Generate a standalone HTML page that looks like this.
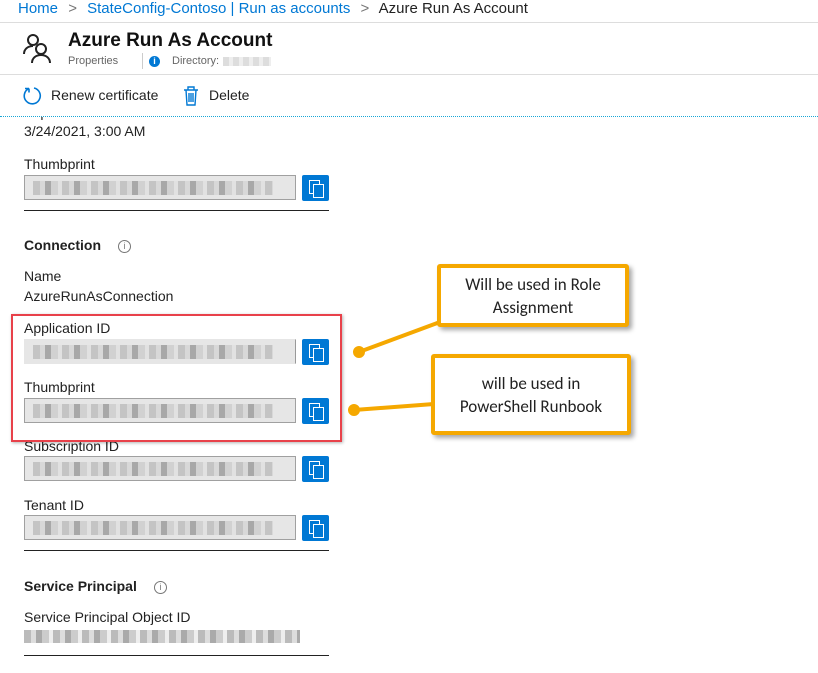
<!DOCTYPE html>
<html><head><meta charset="utf-8"><style>
*{margin:0;padding:0;box-sizing:border-box}
body{width:818px;height:673px;background:#fff;font-family:"Segoe UI","Liberation Sans",sans-serif;color:#222;position:relative;overflow:hidden;font-size:14px}
.a{position:absolute;white-space:nowrap}
.lbl{font-size:14px;color:#222}
.box{position:absolute;left:24px;width:272px;height:25px;background:#e6e6e6;border:1px solid #a0a0a0}
.blur{position:absolute;left:8px;top:5px;width:240px;height:14px;background:
repeating-linear-gradient(90deg,#bbb 0 7px,#d4d4d4 7px 12px,#999 12px 18px,#ccc 18px 25px,#e0e0e0 25px 29px);opacity:.8}
.cb{position:absolute;left:302px;width:27px;height:26px;background:#0078d4;border-radius:2px}
.cb:before,.cb:after{content:"";position:absolute;border:1.5px solid #fff;background:#0078d4}
.cb:before{left:7px;top:5px;width:9px;height:12px}
.cb:after{left:11px;top:9px;width:9px;height:12px}
.hr{position:absolute;left:24px;width:305px;height:1px;background:#222}
.bold{font-weight:bold;font-size:14px}
.info{position:absolute;width:13px;height:13px;border:1px solid #777;border-radius:50%;font-size:9px;color:#777;text-align:center;line-height:11px}
.call{position:absolute;background:#fff;border:4px solid #f5a800;border-radius:3px;box-shadow:3px 3px 5px rgba(0,0,0,.35);font-family:"Carlito","Liberation Sans",sans-serif;font-size:17px;color:#222;text-align:center;line-height:23px}
</style></head><body>
<div class="a" style="left:18px;top:0px;font-size:15px;color:#0078d4">Home <span style="color:#777;margin:0 6px">&gt;</span> StateConfig-Contoso | Run as accounts <span style="color:#777;margin:0 6px">&gt;</span> <span style="color:#222">Azure Run As Account</span></div>
<div class="a" style="left:0;top:22px;width:818px;height:1px;background:#ddd"></div>
<svg class="a" style="left:22px;top:32px" width="32" height="32" viewBox="0 0 32 32" fill="none" stroke="#222" stroke-width="2"><circle cx="11" cy="8" r="5"/><path d="M2 22c0-5 4-8 9-8"/><circle cx="19" cy="17" r="5"/><path d="M10 31c0-5 4-8 9-8s9 3 9 8"/></svg>
<div class="a" style="left:68px;top:30px;font-size:19px;font-weight:600;color:#111">Azure Run As Account</div>
<div class="a" style="left:68px;top:55px;font-size:11px;color:#666">Properties</div>
<div class="a" style="left:142px;top:53px;width:1px;height:16px;background:#ccc"></div>
<div class="a" style="left:149px;top:56px;width:11px;height:11px;border-radius:50%;background:#0078d4;color:#fff;font-size:9px;font-weight:bold;text-align:center;line-height:11px">i</div>
<div class="a" style="left:172px;top:55px;font-size:11px;color:#666">Directory:</div>
<div class="a" style="left:223px;top:57px;width:48px;height:9px;background:repeating-linear-gradient(90deg,#ddd 0 6px,#eee 6px 10px)"></div>
<div class="a" style="left:0;top:74px;width:818px;height:1px;background:#ddd"></div>
<svg class="a" style="left:23px;top:86px" width="20" height="20" viewBox="0 0 20 20" fill="none" stroke="#0078d4" stroke-width="1.6"><path d="M6 2.5A8 8 0 1 0 11 2"/><path d="M6 2.5l0 4M6 2.5l-4 0"/></svg>
<div class="a" style="left:51px;top:87px;font-size:14px">Renew certificate</div>
<svg class="a" style="left:183px;top:86px" width="16" height="20" viewBox="0 0 16 20" fill="none" stroke="#0078d4" stroke-width="1.4"><path d="M1 4h14M5 4V1h6v3M3 4l1 15h8l1-15M6 7v9M8 7v9M10 7v9"/></svg>
<div class="a" style="left:209px;top:87px;font-size:14px">Delete</div>
<div class="a" style="left:0;top:116px;width:818px;height:0;border-top:1px dotted #1aa6d6"></div>
<div class="a" style="left:0;top:117px;width:818px;height:200px;overflow:hidden"><div class="a lbl" style="left:24px;top:-13px">Expiration</div></div>
<div class="a lbl" style="left:24px;top:123px">3/24/2021, 3:00 AM</div>
<div class="a lbl" style="left:24px;top:156px">Thumbprint</div>
<div class="box" style="top:175px"><div class="blur"></div></div><div class="cb" style="top:175px"></div>
<div class="hr" style="top:210px"></div>
<div class="a bold" style="left:24px;top:237px">Connection</div><div class="info" style="left:118px;top:240px">i</div>
<div class="a lbl" style="left:24px;top:268px">Name</div>
<div class="a lbl" style="left:24px;top:288px">AzureRunAsConnection</div>
<div class="a lbl" style="left:24px;top:320px">Application ID</div>
<div class="box" style="top:339px;border-color:#e6e6e6;border-right-color:#999"><div class="blur"></div></div><div class="cb" style="top:339px"></div>
<div class="a lbl" style="left:24px;top:379px">Thumbprint</div>
<div class="box" style="top:398px"><div class="blur"></div></div><div class="cb" style="top:398px"></div>
<div class="a lbl" style="left:24px;top:438px">Subscription ID</div>
<div class="box" style="top:456px"><div class="blur"></div></div><div class="cb" style="top:456px"></div>
<div class="a lbl" style="left:24px;top:497px">Tenant ID</div>
<div class="box" style="top:515px"><div class="blur"></div></div><div class="cb" style="top:515px"></div>
<div class="hr" style="top:550px"></div>
<div class="a bold" style="left:24px;top:578px">Service Principal</div><div class="info" style="left:154px;top:581px">i</div>
<div class="a lbl" style="left:24px;top:609px">Service Principal Object ID</div>
<div class="a" style="left:24px;top:630px;width:276px;height:13px;background:repeating-linear-gradient(90deg,#bbb 0 7px,#ddd 7px 12px,#aaa 12px 18px,#ccc 18px 25px,#eee 25px 29px)"></div>
<div class="hr" style="top:655px"></div>
<div class="a" style="left:11px;top:314px;width:331px;height:128px;border:2px solid #e8414a;box-shadow:1px 1px 3px rgba(0,0,0,.3)"></div>
<svg class="a" style="left:0;top:0" width="818" height="673"><g stroke="#f5a800" stroke-width="4" fill="#f5a800"><line x1="359" y1="352" x2="440" y2="322"/><circle cx="359" cy="352" r="4"/><line x1="354" y1="410" x2="434" y2="404"/><circle cx="354" cy="410" r="4"/></g></svg>
<div class="call" style="left:437px;top:264px;width:192px;height:63px;padding-top:5px">Will be used in Role<br>Assignment</div>
<div class="call" style="left:431px;top:354px;width:200px;height:81px;padding-top:14px">will be used in<br>PowerShell Runbook</div>
</body></html>
